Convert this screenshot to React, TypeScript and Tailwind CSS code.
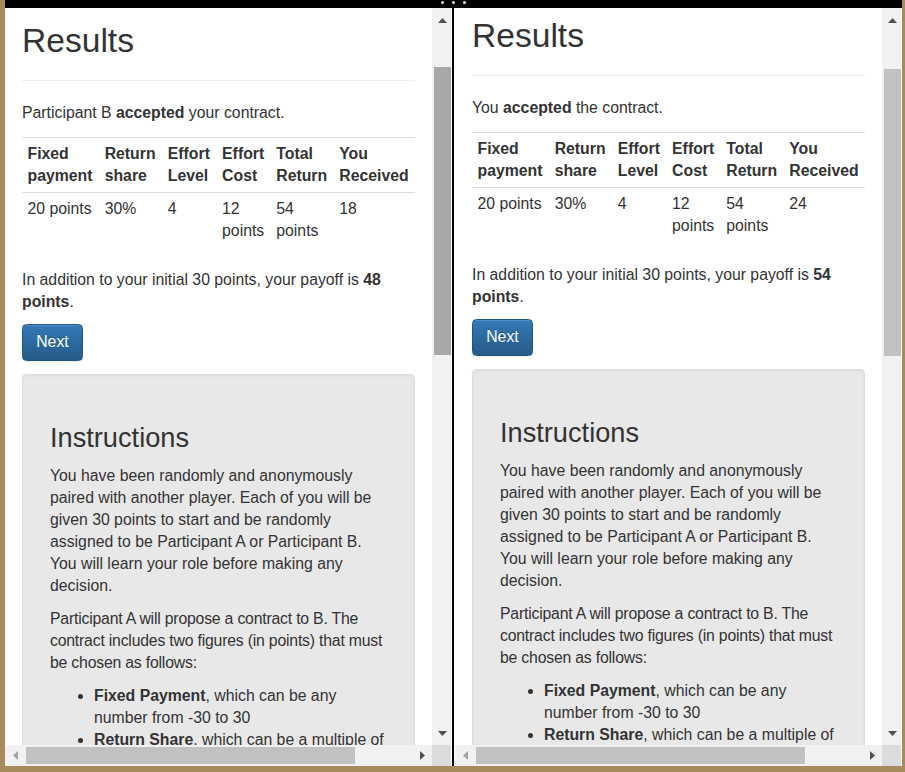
import type { ReactNode } from "react";

type Pane = {
  lead: ReactNode;
  received: string;
  payoff: string;
  shift: string;
  vGap: string;
  vThumb: string;
};

const panes: Pane[] = [
  {
    lead: (
      <>
        Participant B <b>accepted</b> your contract.
      </>
    ),
    received: "18",
    payoff: "48",
    shift: "",
    vGap: "h-[35px]",
    vThumb: "h-[288px] bg-[#a8a8a8]",
  },
  {
    lead: (
      <>
        You <b>accepted</b> the contract.
      </>
    ),
    received: "24",
    payoff: "54",
    shift: "-mt-[5px]",
    vGap: "h-[37px]",
    vThumb: "h-[287px] bg-[#c1c1c1]",
  },
];

const headers = [
  ["Fixed", "payment"],
  ["Return", "share"],
  ["Effort", "Level"],
  ["Effort", "Cost"],
  ["Total", "Return"],
  ["You", "Received"],
];

function Up() {
  return (
    <svg width="9" height="5" viewBox="0 0 9 5">
      <path d="M4.5 0 9 5H0Z" fill="#505050" />
    </svg>
  );
}

function Down() {
  return (
    <svg width="9" height="5" viewBox="0 0 9 5">
      <path d="M0 0h9L4.5 5Z" fill="#505050" />
    </svg>
  );
}

function Left() {
  return (
    <svg width="5" height="9" viewBox="0 0 5 9">
      <path d="M5 0v9L0 4.5Z" fill="#a3a3a3" />
    </svg>
  );
}

function Right() {
  return (
    <svg width="5" height="9" viewBox="0 0 5 9">
      <path d="M0 0l5 4.5L0 9Z" fill="#505050" />
    </svg>
  );
}

function Content({ pane }: { pane: Pane }) {
  const cells = ["20 points", "30%", "4", "12 points", "54 points", pane.received];
  return (
    <div className="px-[17px] font-['Liberation_Sans',Arial,sans-serif] text-[15.8px] leading-[22px] text-[#333]">
      <div className="mb-[21px] border-b border-[#eee] pb-[9px]">
        <h1 className="mt-[11px] mb-[8px] text-[33.6px] leading-[43.6px] font-medium">Results</h1>
      </div>
      <p className="mb-[13px]">{pane.lead}</p>
      <table className="mb-[21px] w-full border-collapse">
        <thead>
          <tr>
            {headers.map((h) => (
              <th
                key={h.join(" ")}
                className="border-t border-b border-[#ddd] px-[5.5px] pt-[5px] pb-[5.5px] text-left align-bottom font-bold"
              >
                {h[0]} {h[1]}
              </th>
            ))}
          </tr>
        </thead>
        <tbody>
          <tr>
            {cells.map((c, i) => (
              <td key={i} className="px-[5.5px] pt-[5px] pb-[5.5px] align-top">
                {c}
              </td>
            ))}
          </tr>
        </tbody>
      </table>
      <p className="mb-[11px]">
        In addition to your initial 30 points, your payoff is <b>{pane.payoff} points</b>.
      </p>
      <button className="rounded-[4.4px] border border-[#245580] bg-gradient-to-b from-[#337ab7] to-[#265a88] px-[13.2px] py-[6.6px] text-[15.8px] leading-[22px] text-white shadow-[inset_0_1px_0_rgba(255,255,255,0.15),0_1px_1px_rgba(0,0,0,0.075)] [text-shadow:0_-1px_0_rgba(0,0,0,0.2)]">
        Next
      </button>
      <div className="mt-[13px] rounded-[4.4px] border border-[#dcdcdc] bg-[#e8e8e8] px-[27px] pt-[21px] pb-[21px] shadow-[inset_0_1px_3px_rgba(0,0,0,0.05)]">
        <h2 className="mt-[24px] mb-[9px] text-[27.2px] leading-[36.3px] font-medium">Instructions</h2>
        <p className="mb-[11px]">
          You have been randomly and anonymously paired with another player. Each of you will be given 30
          points to start and be randomly assigned to be Participant A or Participant B. You will learn your
          role before making any decision.
        </p>
        <p className="mb-[11px] tracking-[-0.2px]">
          Participant A will propose a contract to B. The contract includes two figures (in points) that must
          be chosen as follows:
        </p>
        <ul className="mb-[11px] list-disc pl-[44px]">
          <li>
            <b>Fixed Payment</b>, which can be any number from -30 to 30
          </li>
          <li>
            <b>Return Share</b>, which can be a multiple of 10% from 0% to 100%
          </li>
        </ul>
        <p className="mb-[11px]">
          Participant B will then decide whether to accept or reject the contract.
        </p>
      </div>
    </div>
  );
}

function PaneView({ pane }: { pane: Pane }) {
  return (
    <div className="flex w-[446px] flex-col">
      <div className="flex h-[737px]">
        <div className="h-full w-[427px] overflow-hidden bg-white">
          <div className={pane.shift}>
            <Content pane={pane} />
          </div>
        </div>
        <div className="flex w-[19px] flex-col bg-[#f1f1f1]">
          <div className="flex h-[24px] items-center justify-center pl-[2px]">
            <Up />
          </div>
          <div className={pane.vGap} />
          <div className={`ml-[2px] w-[17px] ${pane.vThumb}`} />
          <div className="flex-1" />
          <div className="flex h-[24px] items-center justify-center pl-[2px]">
            <Down />
          </div>
        </div>
      </div>
      <div className="flex h-[21px]">
        <div className="flex w-[427px] bg-[#f1f1f1]">
          <div className="flex w-[20px] items-center justify-center">
            <Left />
          </div>
          <div className="mt-[2px] ml-[1px] h-[17px] w-[329px] bg-[#c1c1c1]" />
          <div className="flex-1" />
          <div className="flex w-[20px] items-center justify-center">
            <Right />
          </div>
        </div>
        <div className="w-[19px] bg-[#dcdcdc]" />
      </div>
    </div>
  );
}

export default function App() {
  return (
    <div className="flex h-[772px] w-[905px] flex-col overflow-hidden border-r-[3px] border-b-[6px] border-l-[5px] border-[#a88b5c] bg-white">
      <div className="flex h-[8px] shrink-0 items-start justify-center gap-[8px] bg-black pt-[1px]">
        <span className="h-[3px] w-[3px] rounded-full bg-[#eef4ff]" />
        <span className="h-[3px] w-[3px] rounded-full bg-[#eef4ff]" />
        <span className="h-[3px] w-[3px] rounded-full bg-[#eef4ff]" />
      </div>
      <div className="flex h-[758px]">
        <PaneView pane={panes[0]} />
        <div className="w-[1px] bg-white" />
        <div className="w-[2px] bg-black" />
        <div className="w-[1px] bg-white" />
        <PaneView pane={panes[1]} />
        <div className="w-[1px] bg-white" />
      </div>
    </div>
  );
}
